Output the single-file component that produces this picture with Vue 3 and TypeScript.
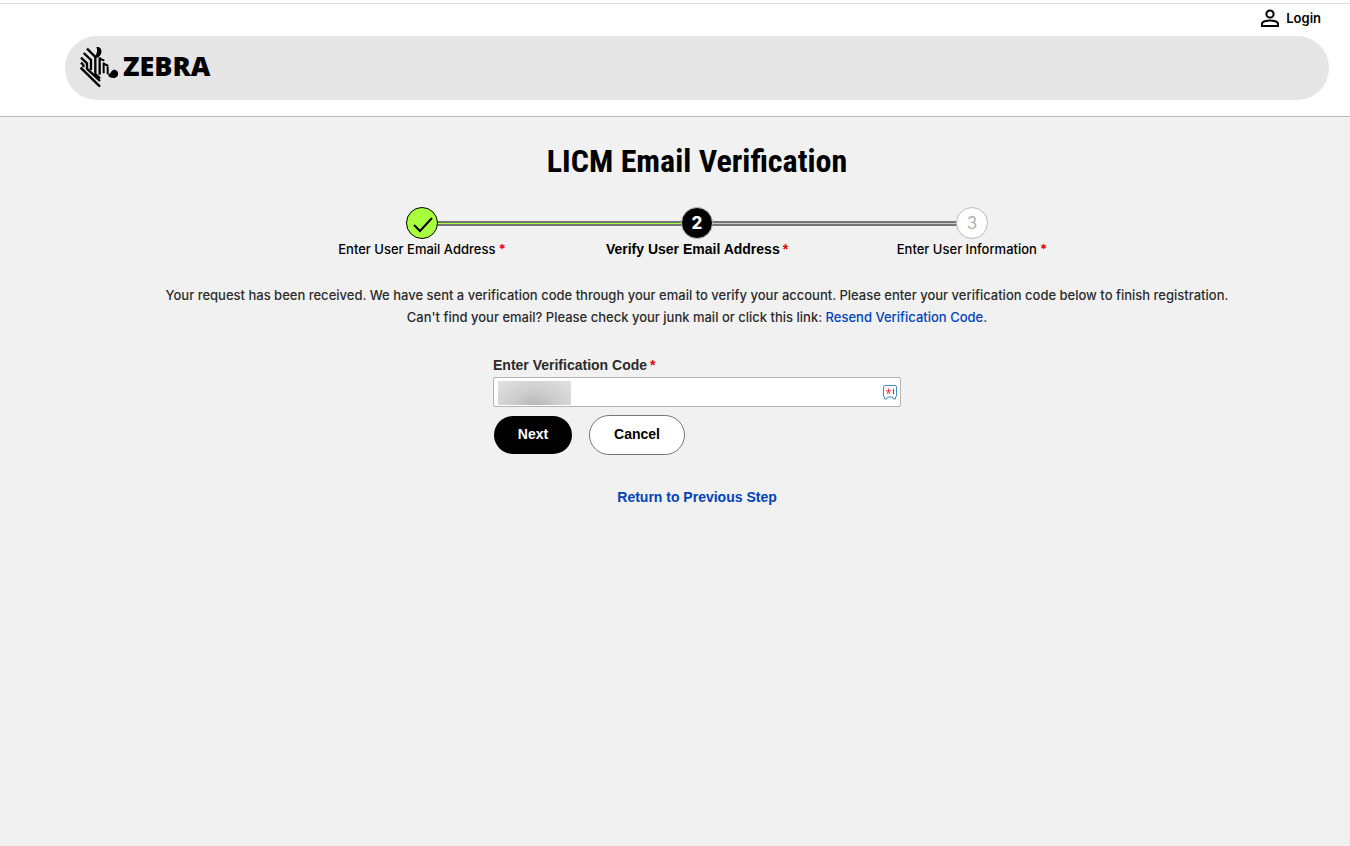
<script setup lang="ts">
import { ref } from 'vue'

interface Step {
  label: string
  state: 'done' | 'current' | 'todo'
}

const steps: Step[] = [
  { label: 'Enter User Email Address', state: 'done' },
  { label: 'Verify User Email Address', state: 'current' },
  { label: 'Enter User Information', state: 'todo' },
]

const code = ref('')
</script>

<template>
  <div class="page">
    <header class="header">
      <div class="account">
        <a class="login" href="#login">
          <svg class="login-icon" viewBox="0 0 20 20" aria-hidden="true">
            <circle cx="10" cy="6" r="3.6" />
            <path d="M2 18v-2.200c0-2.200 4.400-3.400 8-3.400s8 1.200 8 3.400V18z" />
          </svg>
          <span>Login</span>
        </a>
      </div>
      <div class="brand-bar">
        <a class="brand" href="#home" aria-label="Zebra home">
          <svg class="brand-mark" viewBox="15 12 117 126" aria-hidden="true">
            <g class="stripes">
              <path d="M36 20L61 45V96L75 109" />
              <path d="M26 33L48 54V84" />
              <path d="M18 47L36 64V80L75 117" />
              <path d="M18 62L25 69V76" />
              <path d="M17 77L75 134" />
              <path d="M74 46V98" />
            </g>
            <g class="mane">
              <path d="M86 62V94M98 74V97" />
              <path d="M74 50L88 56M84 64L100 72" />
            </g>
            <path d="M64 15C75 13 81 21 79 32C78 39 73 43 66 48L60 42C67 35 68 23 64 15z" />
            <path d="M99 97C107 96 108 86 116 83C125 82 131 90 129 98C127 110 109 111 101 103z" />
          </svg>
          <span class="brand-name">ZEBRA</span>
        </a>
      </div>
    </header>

    <main class="content">
      <h1>LICM Email Verification</h1>

      <ol class="steps">
        <li v-for="(step, i) in steps" :key="step.label" class="step" :class="step.state">
          <span class="marker">
            <svg v-if="step.state === 'done'" viewBox="0 0 32 32" aria-hidden="true">
              <path d="M8 18l6 6L26 11" />
            </svg>
            <template v-else>{{ i + 1 }}</template>
          </span>
          <span class="step-label">{{ step.label }}<b class="required">*</b></span>
        </li>
      </ol>

      <p class="message">
        Your request has been received. We have sent a verification code through your email to verify your account. Please enter your verification code below to finish registration.<br />
        Can't find your email? Please check your junk mail or click this link: <a href="#resend">Resend Verification Code</a>.
      </p>

      <form class="form" @submit.prevent>
        <label for="code">Enter Verification Code<b class="required">*</b></label>
        <div class="field">
          <span class="redacted"></span>
          <input id="code" v-model="code" type="text" autocomplete="one-time-code" />
          <svg class="field-icon" viewBox="0 0 14 15" aria-hidden="true">
            <path class="safe" d="M2 .5h10q1.500 0 1.500 1.500v9q0 1-1 1v2h-2l-1-2h-5l-1 2h-2v-2q-1 0-1-1v-9q0-1.500 1.500-1.500z" />
            <path class="star" d="M5.500 3.500v3M3 5.500l2.500 1 2.500-1M4 9l1.500-2.500L7 9" />
            <path class="bar" d="M10.500 4v5" />
          </svg>
        </div>
        <div class="actions">
          <button class="next" type="submit">Next</button>
          <button class="cancel" type="button">Cancel</button>
        </div>
      </form>

      <a class="previous" href="#previous">Return to Previous Step</a>
    </main>
  </div>
</template>

<style>
body {
  margin: 0;
  background: #f1f1f1;
}
</style>

<style scoped>
.page {
  color: #000;
  font: 400 14px/22px "Liberation Sans", Arial, sans-serif;
}

a {
  color: #0043b8;
  text-decoration: none;
}

.header {
  padding: 0 21px 16px 65px;
  background: #fff;
  border-top: 1px solid #fff;
  border-bottom: 1px solid #b9b9b9;
}

.account {
  display: flex;
  justify-content: flex-end;
  margin: 2px -21px 0 -65px;
  padding: 3px 29px 7px;
  border-top: 1px solid #e0e0e0;
}

.login {
  display: flex;
  align-items: center;
  gap: 6px;
  color: #000;
  font: 600 13px/22px Inter, sans-serif;
}

.login-icon {
  width: 20px;
  height: 20px;
  fill: none;
  stroke: #000;
  stroke-width: 2;
}

.brand-bar {
  display: flex;
  box-sizing: border-box;
  height: 64px;
  padding: 10px 15px;
  background: #e5e5e5;
  border-radius: 32px;
}

.brand {
  display: flex;
  align-items: flex-start;
  gap: 4px;
  color: #000;
}

.brand-mark {
  width: 39px;
  height: 42px;
}

.stripes,
.mane {
  fill: none;
  stroke: #000;
  stroke-width: 7;
}

.mane {
  stroke-width: 6;
}

.brand-name {
  font: 800 27px/40px "Open Sans", sans-serif;
}

.content {
  display: flex;
  flex-direction: column;
  align-items: center;
  padding: 24px 21px 24px 65px;
}

h1 {
  margin: 0;
  font: 700 32px/40px "Roboto Condensed", "Liberation Sans Narrow", sans-serif;
}

.steps {
  display: flex;
  width: 825px;
  max-width: 100%;
  margin: 26px 0 0;
  padding: 0;
  list-style: none;
}

.step {
  position: relative;
  display: flex;
  flex: 1;
  flex-direction: column;
  align-items: center;
}

.step + .step::before {
  position: absolute;
  top: 14px;
  right: 50%;
  width: 100%;
  height: 1px;
  background: #ccc;
  border: solid #757575;
  border-width: 2px 0;
  content: "";
}

.step + .step.current::before {
  background: #a8ff3e;
}

.marker {
  z-index: 1;
  display: flex;
  align-items: center;
  justify-content: center;
  box-sizing: border-box;
  width: 32px;
  height: 32px;
  background: #fff;
  border: 1px solid #bbb;
  border-radius: 50%;
  color: #b3b3b3;
  font-family: Inter, sans-serif;
  font-size: 17px;
}

.marker svg {
  flex: none;
  width: 32px;
  height: 32px;
  fill: none;
  stroke: #000;
  stroke-width: 2;
}

.done .marker {
  background: #a8ff3e;
  border-color: #000;
}

.current .marker {
  background: #000;
  color: #fff;
  font-weight: 800;
}

.step-label {
  font: 500 13px/20px Inter, sans-serif;
  white-space: nowrap;
}

.current .step-label {
  font: 700 14px/20px "Liberation Sans", Arial, sans-serif;
}

.required {
  margin-left: 3px;
  color: #e00;
}

.message {
  margin: 25px 0 0;
  color: #2b2b2b;
  font: 500 13px/22px Inter, sans-serif;
  text-align: center;
}

.form {
  width: 408px;
  max-width: 100%;
  margin-top: 26px;
}

label {
  display: block;
  color: #2b2b2b;
  font-weight: 700;
}

.field {
  position: relative;
  margin-top: 1px;
}

input {
  display: block;
  box-sizing: border-box;
  width: 100%;
  height: 30px;
  padding: 0 32px 0 6px;
  background: #fff;
  border: 1px solid #b5b5b5;
  border-radius: 2px;
  font: inherit;
}

.redacted {
  position: absolute;
  top: 4px;
  left: 5px;
  width: 73px;
  height: 24px;
  background: radial-gradient(ellipse at 50% 110%, #b5b5b5, #cdcdcd 45%, #e2e2e2);
}

.field-icon {
  position: absolute;
  top: 8px;
  right: 4px;
  width: 14px;
  height: 15px;
  fill: none;
}

.safe {
  fill: #fff;
  stroke: #4b8bc8;
}

.star {
  stroke: #ef3340;
}

.bar {
  stroke: #2b5f93;
}

.actions {
  display: flex;
  align-items: center;
  gap: 17px;
  margin: 8px 0 0 1px;
}

button {
  box-sizing: border-box;
  padding: 0 0 2px;
  border-radius: 20px;
  font: inherit;
  font-weight: 700;
}

.next {
  width: 78px;
  height: 38px;
  background: #000;
  border: 0;
  color: #fff;
}

.cancel {
  width: 96px;
  height: 40px;
  background: #fff;
  border: 1px solid #757575;
  color: #000;
}

.previous {
  margin-top: 31px;
  font-weight: 700;
}
</style>
